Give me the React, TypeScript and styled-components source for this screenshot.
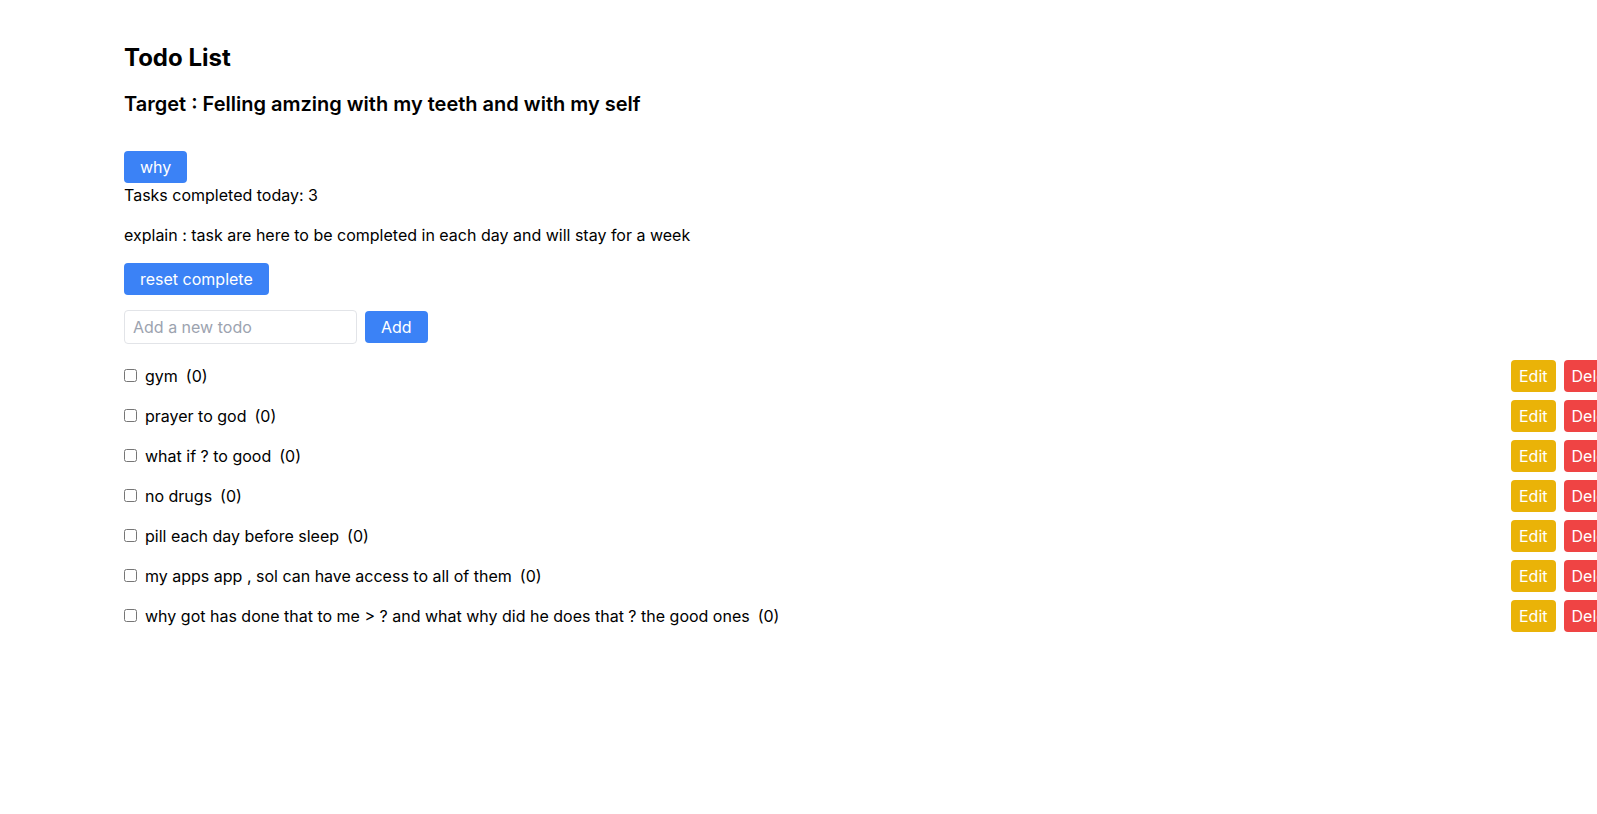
import React from "react";
import styled, { createGlobalStyle } from "styled-components";

const GlobalStyle = createGlobalStyle`
  html, body {
    margin: 0;
    padding: 0;
    background: #ffffff;
    overflow-x: hidden;
  }
  body {
    font-family: Inter, "Noto Sans", "Liberation Sans", sans-serif;
    color: #000000;
    font-size: 16px;
    line-height: 24px;
  }
  * { box-sizing: border-box; }
`;

const Page = styled.div`
  padding: 42px 0 40px 124px;
`;

const Title = styled.h1`
  margin: 0 0 16px;
  font-size: 24px;
  line-height: 32px;
  font-weight: 700;
`;

const Target = styled.h2`
  margin: 0 0 33px;
  font-size: 20px;
  line-height: 28px;
  font-weight: 600;
`;

const Button = styled.button<{ $tone?: "blue" | "yellow" | "red"; $pad?: number }>`
  font-family: inherit;
  font-size: 16px;
  line-height: 24px;
  font-weight: 400;
  color: #ffffff;
  border: none;
  border-radius: 4px;
  padding: 4px ${(p) => p.$pad ?? 16}px;
  margin: 0;
  cursor: pointer;
  background: ${(p) =>
    p.$tone === "yellow" ? "#eab308" : p.$tone === "red" ? "#ef4444" : "#3b82f6"};
  white-space: nowrap;
`;

const Text = styled.p<{ $mt?: number; $mb?: number }>`
  margin: ${(p) => p.$mt ?? 0}px 0 ${(p) => p.$mb ?? 0}px;
  font-size: 16px;
  line-height: 24px;
`;

const Block = styled.div<{ $mb?: number }>`
  margin-bottom: ${(p) => p.$mb ?? 0}px;
`;

const AddRow = styled.div`
  display: flex;
  align-items: center;
  gap: 8px;
  margin-bottom: 16px;
`;

const Input = styled.input`
  width: 233px;
  font-family: inherit;
  font-size: 16px;
  line-height: 24px;
  padding: 4px 8px;
  border: 1px solid #e2e4e8;
  border-radius: 4px;
  color: #000;
  outline: none;
  &::placeholder {
    color: #9ca3af;
  }
`;

const List = styled.ul`
  list-style: none;
  margin: 0;
  padding: 0;
  width: 1504px;
`;

const Row = styled.li`
  display: flex;
  align-items: center;
  justify-content: space-between;
  margin-bottom: 8px;
`;

const Label = styled.label`
  font-size: 16px;
  line-height: 24px;
`;

const Check = styled.input`
  width: 13px;
  height: 13px;
  margin: 0 8px 0 0;
`;

const Count = styled.span`
  margin-left: 8px;
`;

const Actions = styled.div`
  display: flex;
  gap: 8px;
`;

const todos = [
  "gym",
  "prayer to god",
  "what if ? to good",
  "no drugs",
  "pill each day before sleep",
  "my apps app , sol can have access to all of them",
  "why got has done that to me > ? and what why did he does that ? the good ones",
];

export default function App() {
  return (
    <>
      <GlobalStyle />
      <Page>
        <Title>Todo List</Title>
        <Target>Target : Felling amzing with my teeth and with my self</Target>
        <Block>
          <Button>why</Button>
        </Block>
        <Text $mb={16}>Tasks completed today: 3</Text>
        <Text $mb={16}>explain : task are here to be completed in each day and will stay for a week</Text>
        <Block $mb={15}>
          <Button>reset complete</Button>
        </Block>
        <AddRow>
          <Input placeholder="Add a new todo" />
          <Button>Add</Button>
        </AddRow>
        <List>
          {todos.map((t) => (
            <Row key={t}>
              <Label>
                <Check type="checkbox" />
                {t}
                <Count>(0)</Count>
              </Label>
              <Actions>
                <Button $tone="yellow" $pad={8}>Edit</Button>
                <Button $tone="red" $pad={8}>Delete</Button>
              </Actions>
            </Row>
          ))}
        </List>
      </Page>
    </>
  );
}
